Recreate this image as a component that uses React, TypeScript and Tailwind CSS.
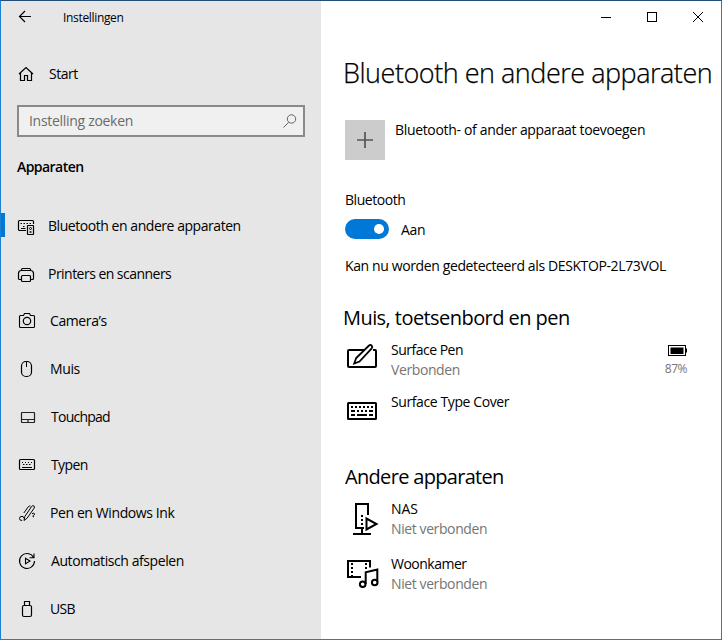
import type { ReactNode } from "react";

type NavItem = {
    label: string;
    icon: ReactNode;
    row?: string;
    text?: string;
    active?: boolean;
};

function Icon({ children, className = "w-6 h-6", size = "0 0 24 24" }: { children: ReactNode; className?: string; size?: string }) {
    return (
        <svg viewBox={size} className={`${className} shrink-0`} fill="none" stroke="#000" strokeWidth="1">
            {children}
        </svg>
    );
}

const navItems: NavItem[] = [
    {
        label: "Bluetooth en andere apparaten",
        active: true,
        text: "ml-[9px] tracking-[-0.45px]",
        icon: (
            <Icon>
                <path d="M11 16.5H4.5q-1 0-1-1v-8q0-1 1-1h13q1 0 1 1V10" strokeWidth="1.2" />
                <path d="M5.500 9.500h1.500M8.500 9.500h1.500M11.500 9.500h1.500M14.500 9.500h1.500M8 12.500h1.500M6 14.500h4.500" />
                <rect x="12.5" y="11.5" width="6" height="9" rx="0.5" fill="#e6e6e6" strokeWidth="1.2" />
                <circle cx="15.500" cy="14.500" r="1" />
                <path d="M14.500 18h2" strokeWidth="1.500" />
            </Icon>
        ),
    },
    {
        label: "Printers en scanners",
        row: "h-[47px]",
        text: "ml-[9px] tracking-[-0.53px]",
        icon: (
            <Icon>
                <path d="M6.500 8.500V7.500q0-1 1-1h7q1 0 1 1v1M6.500 17.500h-2q-1 0-1-1v-5q0-3 3-3h9q3 0 3 3v5q0 1-1 1h-2" strokeWidth="1.2" />
                <rect x="6.500" y="13.500" width="9" height="6" rx="1" strokeWidth="1.2" />
            </Icon>
        ),
    },
    {
        label: "Camera’s",
        text: "ml-[11px] tracking-[-0.4px]",
        icon: (
            <Icon>
                <path d="M5.500 6.500h3l1-2h5l1 2h3q1 0 1 1v10q0 1-1 1h-13q-1 0-1-1v-10q0-1 1-1z" strokeWidth="1.100" />
                <circle cx="12" cy="12" r="3.700" strokeWidth="1.200" />
            </Icon>
        ),
    },
    {
        label: "Muis",
        text: "ml-[11px] tracking-[-0.4px]",
        icon: (
            <Icon>
                <rect x="6.500" y="4.500" width="10" height="15" rx="4.500" strokeWidth="1.200" />
                <path d="M11.500 5v5" />
            </Icon>
        ),
    },
    {
        label: "Touchpad",
        text: "ml-[12px] tracking-[-0.75px]",
        icon: (
            <Icon>
                <rect x="6.500" y="7.500" width="13" height="10" rx="0.500" stroke="#222" strokeWidth="1.200" />
                <path d="M7 14.500h12M13 14.500v3" stroke="#222" strokeWidth="1.200" />
            </Icon>
        ),
    },
    {
        label: "Typen",
        text: "ml-[12px] tracking-[-0.6px]",
        icon: (
            <Icon>
                <rect x="4.500" y="6.500" width="15" height="10" rx="1" strokeWidth="1.200" />
                <path d="M7 9.500h1M10 9.500h1M13 9.500h1M16 9.500h1M8 11.500h1.500M11 11.500h1.500M14 11.500h1.500M7 14.500h10" strokeWidth="1.200" />
            </Icon>
        ),
    },
    {
        label: "Pen en Windows Ink",
        text: "ml-[11px] tracking-[-0.4px]",
        icon: (
            <Icon>
                <path d="M9 19.500l.8-4L16.600 5.500q1.200-1.400 2.300-.6 1 .9.200 2.300l-6.900 9.900z" />
                <path d="M15.500 5.200q-1.300-.6-2.300.7L8.800 12M7.200 19.500q-2.700.2-2.700-2t2.500-2.200q1.800.1 2 2M17 12.700q2.300-1.100 2.600.1.300 1-1.400 1.700-1.100.6-.2 1.200l1 .2" />
            </Icon>
        ),
    },
    {
        label: "Automatisch afspelen",
        text: "ml-[12px] tracking-[-0.42px]",
        icon: (
            <Icon>
                <path d="M18.500 8.200A7.500 7.500 0 1 0 19.500 12M19 4.500v4.200h-4.500" strokeWidth="1.100" />
                <path d="M10.500 9.200v5.600l4.500-2.800z" strokeWidth="1.100" />
            </Icon>
        ),
    },
    {
        label: "USB",
        text: "ml-[11px] tracking-[-0.7px]",
        icon: (
            <Icon>
                <rect x="7.500" y="8.500" width="9" height="11" rx="1.500" strokeWidth="1.200" />
                <path d="M9.500 8.500v-4h5v4" strokeWidth="1.200" />
            </Icon>
        ),
    },
];

function Sidebar() {
    return (
        <aside className="w-80 shrink-0 bg-[#e6e6e6]">
            <div className="flex items-center h-8 pl-[17px]">
                <Icon className="w-4 h-4" size="0 0 16 16">
                    <path d="M13 7.500H1.500M7 2L1.500 7.500 7 13" strokeWidth="1.200" />
                </Icon>
                <span className="ml-[29px] pt-[2px] text-xs tracking-[-0.33px]">Instellingen</span>
            </div>
            <div className="flex items-center h-12 mt-[17px] pl-[14px]">
                <Icon>
                    <path d="M4 12l7-6.500 7 6.500M5.500 11v7.500h4V13.500h3v5h4V11" strokeWidth="1.200" />
                </Icon>
                <span className="ml-[10px] tracking-[-0.5px]">Start</span>
            </div>
            <div className="flex items-center justify-between h-8 mt-[7px] ml-4 mr-4 pl-[10px] pr-[5px] border-2 border-[#8a8a8a] bg-[#f0f0f0] text-[#6b6b6b]">
                <span className="pb-px tracking-[-0.3px]">Instelling zoeken</span>
                <Icon className="w-4 h-4" size="0 0 16 16">
                    <path d="M1.500 14.500l5.200-5.200" stroke="#666" />
                    <circle cx="9.500" cy="6" r="4.200" stroke="#666" />
                </Icon>
            </div>
            <h2 className="mt-[20px] ml-4 leading-5 font-semibold tracking-[-0.55px]">Apparaten</h2>
            <nav className="mt-[25px]">
                {navItems.map((item) => (
                    <div key={item.label} className={`flex items-center ${item.row ?? "h-12"}`}>
                        <span className={`w-1 h-6 mb-[2px] mr-[10px] ${item.active ? "bg-[#0078d7]" : ""}`} />
                        {item.icon}
                        <span className={item.text}>{item.label}</span>
                    </div>
                ))}
            </nav>
        </aside>
    );
}

type DeviceProps = {
    icon: ReactNode;
    name: string;
    status?: string;
    className?: string;
    nameClass?: string;
};

function Device({ icon, name, status, className = "", nameClass = "tracking-[-0.5px]" }: DeviceProps) {
    return (
        <div className={`flex ${className}`}>
            {icon}
            <div className="ml-[10px] leading-5">
                <p className={nameClass}>{name}</p>
                {status && <p className="text-[#757575] tracking-[-0.4px]">{status}</p>}
            </div>
        </div>
    );
}

const penIcon = (
    <Icon className="w-9 h-10" size="0 0 36 40">
        <path d="M19 10H4q-1 0-1 1v15q0 1 1 1h26q1 0 1-1V11q0-1-1-1h-2" strokeWidth="2" />
        <path d="M9.200 23.500l2-5.500L24 5.500q1.500-1 2.700.2 1.200 1.300 0 2.700L14.500 21.500z" strokeWidth="1.800" />
    </Icon>
);

const keyboardIcon = (
    <Icon className="w-9 h-10" size="0 0 36 40">
        <rect x="3" y="11" width="28" height="16" rx="0.500" strokeWidth="2" />
        <path d="M6 15h2M10 15h2M14 15h2M18 15h2M22 15h2M26 15h2M6 19h4M12 19h2M16 19h2M20 19h2M24 19h4M6 23h4M12 23h10M24 23h4" strokeWidth="2" />
    </Icon>
);

const nasIcon = (
    <Icon className="w-9 h-10" size="0 0 36 40">
        <path d="M19 29h-8V5h12v11M17 29v5M8 35h18" strokeWidth="2" />
        <path d="M16 17h2M16 21h2M16 25h2" strokeWidth="2" />
        <path d="M21.500 19.500v11l10-5.500z" strokeWidth="2" />
    </Icon>
);

const mediaIcon = (
    <Icon className="w-9 h-10" size="0 0 36 40">
        <path d="M16 23H3V7h22v6.500" strokeWidth="2" />
        <path d="M7 9v13M21 9v6" strokeWidth="2" strokeDasharray="2 2" />
        <path d="M20.700 30V18.300l11.600-2.800V28" strokeWidth="2" />
        <circle cx="17.700" cy="30.300" r="2.800" strokeWidth="2" />
        <circle cx="29.700" cy="28.500" r="2.800" strokeWidth="2" />
    </Icon>
);

function Content() {
    return (
        <main className="flex-1 min-w-0 bg-white">
            <div className="flex items-center justify-end h-8 pr-[18px] gap-[36px]">
                <Icon className="w-[10px] h-[10px]" size="0 0 10 10"><path d="M0 5.500h10" /></Icon>
                <Icon className="w-[10px] h-[10px]" size="0 0 10 10"><rect x="0.500" y="0.500" width="9" height="9" /></Icon>
                <Icon className="w-[10px] h-[10px]" size="0 0 10 10"><path d="M0 0l10 10M10 0L0 10" /></Icon>
            </div>
            <h1 className="mt-[20px] ml-[22px] text-[27px] leading-10 font-light tracking-[-0.48px] whitespace-nowrap [-webkit-text-stroke:0.25px_#000]">Bluetooth en andere apparaten</h1>
            <div className="ml-6">
                <div className="flex mt-[27px]">
                    <div className="flex items-center justify-center w-10 h-10 bg-[#ccc]">
                        <Icon className="w-4 h-4" size="0 0 16 16"><path d="M0 8h16M8 0v16" stroke="#555" strokeWidth="1.700" /></Icon>
                    </div>
                    <span className="ml-[10px] leading-5 tracking-[-0.33px] whitespace-nowrap">Bluetooth- of ander apparaat toevoegen</span>
                </div>
                <p className="mt-[30px] leading-5 tracking-[-0.45px]">Bluetooth</p>
                <div className="flex items-center mt-[9px] h-5">
                    <span className="flex items-center justify-end w-11 h-5 pr-[5px] rounded-full bg-[#0078d7]">
                        <span className="w-[10px] h-[10px] rounded-full bg-white" />
                    </span>
                    <span className="ml-3 pt-[2px] tracking-[-0.3px]">Aan</span>
                </div>
                <p className="mt-[17px] leading-5 tracking-[-0.38px] whitespace-nowrap">Kan nu worden gedetecteerd als DESKTOP-2L73VOL</p>
            </div>
            <h2 className="mt-[28px] ml-[22px] text-[20px] leading-7 tracking-[-0.56px]">Muis, toetsenbord en pen</h2>
            <div className="flex justify-between ml-6 mt-[8px] pr-[34px]">
                <Device icon={penIcon} name="Surface Pen" status="Verbonden" />
                <div className="flex flex-col items-end">
                    <Icon className="w-5 h-5" size="0 0 20 20">
                        <rect x="1.500" y="5.500" width="17" height="10" />
                        <rect x="4" y="8" width="12" height="5.500" fill="#000" />
                        <path d="M19.500 8.500v4" />
                    </Icon>
                    <span className="mt-px text-xs leading-4 text-[#757575] tracking-[-0.5px]">87%</span>
                </div>
            </div>
            <Device className="ml-6 mt-[12px]" icon={keyboardIcon} name="Surface Type Cover" nameClass="tracking-[-0.4px]" />
            <h2 className="mt-[31px] ml-6 text-[20px] leading-7 tracking-[-0.68px]">Andere apparaten</h2>
            <Device className="ml-6 mt-[8px]" icon={nasIcon} name="NAS" status="Niet verbonden" nameClass="tracking-[-0.1px]" />
            <Device className="ml-6 mt-[15px]" icon={mediaIcon} name="Woonkamer" status="Niet verbonden" />
        </main>
    );
}

export default function App() {
    return (
        <div className="flex w-[722px] h-[640px] overflow-hidden border border-[#1a80d4] border-t-[#1f4e79] text-sm text-black font-['Open_Sans','Noto_Sans',sans-serif]">
            <Sidebar />
            <Content />
        </div>
    );
}
